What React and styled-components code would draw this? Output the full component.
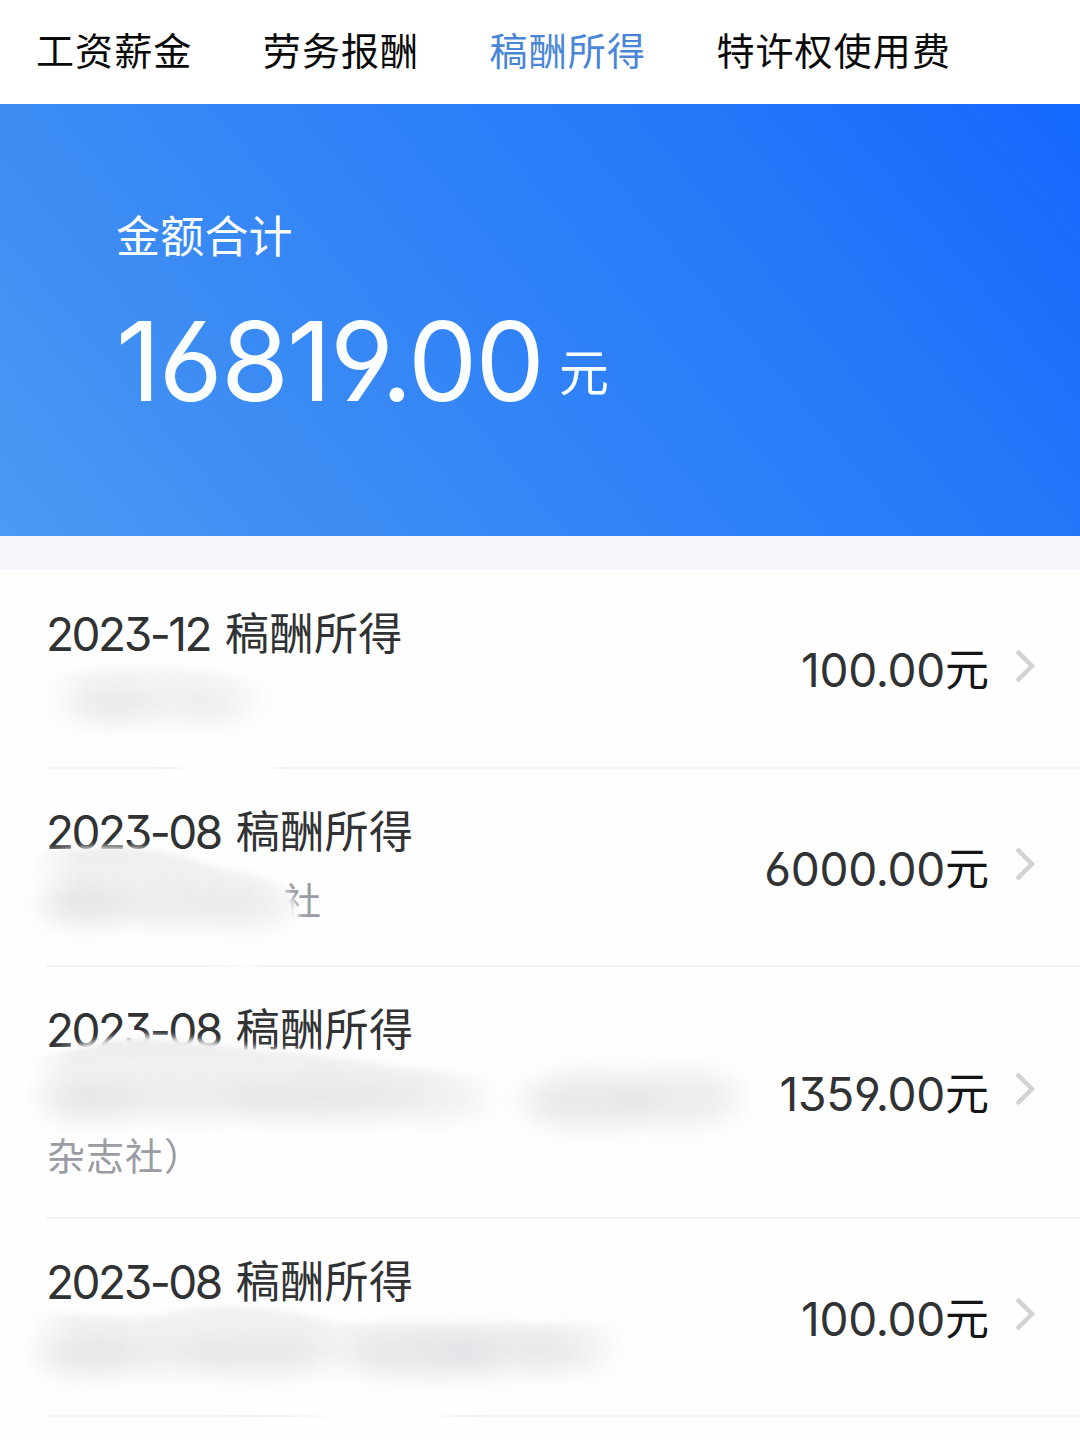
import React from 'react';
import styled, { createGlobalStyle } from 'styled-components';

const GlobalStyle = createGlobalStyle`
  *, *::before, *::after { box-sizing: border-box; }
  body {
    margin: 0;
    background: #fefefe;
    font-family: Inter, "Noto Sans CJK SC", sans-serif;
    font-feature-settings: "cv03", "cv04", "cv09", "ss03";
    color: #303234;
  }
`;

const Page = styled.main`
  width: 1080px;
  height: 1440px;
  overflow: hidden;
  background: #fefefe;
`;

const Tabs = styled.nav`
  display: flex;
  align-items: center;
  gap: 70.4px;
  height: 104px;
  padding: 0 36px 3px;
  background: #fff;
`;

const Tab = styled.a`
  font-size: 38px;
  line-height: 56px;
  letter-spacing: 1.1px;
  white-space: nowrap;
  color: ${({ $active }) => ($active ? '#4a86d8' : '#0a0a0a')};
`;

const Summary = styled.section`
  display: flex;
  flex-direction: column;
  height: 432px;
  padding: 101px 116px 0;
  color: #fafeff;
  background: linear-gradient(50deg, #4b9af4 0%, #3c8cf3 25%, #3182f8 48%, #2578f8 72%, #1467fd 100%);
`;

const SummaryLabel = styled.div`
  font-size: 44px;
  line-height: 64px;
  letter-spacing: 0.2px;
`;

const SummaryTotal = styled.div`
  margin-top: 26px;
  line-height: 132px;
`;

const TotalNumber = styled.span`
  font-size: 110px;
  letter-spacing: -1.9px;
`;

const TotalUnit = styled.span`
  margin-left: 16px;
  font-size: 50px;
  line-height: 1;
  vertical-align: 10px;
`;

const List = styled.ul`
  margin: 0;
  padding: 0 0 0 46px;
  list-style: none;
  border-top: 34px solid #f4f6fb;
`;

const Row = styled.li`
  position: relative;
  display: flex;
  align-items: center;
  justify-content: space-between;
  height: ${({ $height }) => $height}px;
  padding-right: 44px;
  border-bottom: 2px solid #f1f2f2;
`;

const Details = styled.div`
  align-self: flex-start;
  padding-top: ${({ $top }) => $top}px;
`;

const Title = styled.div`
  height: 66px;
  line-height: 66px;
  white-space: nowrap;
`;

const Month = styled.span`
  font-size: 46px;
  letter-spacing: -2.5px;
`;

const Category = styled.span`
  margin-left: 15px;
  font-size: 44px;
  line-height: 1;
  letter-spacing: 0.4px;
  vertical-align: 1px;
`;

const Payer = styled.div`
  margin-top: ${({ $gap }) => $gap}px;
  padding-left: ${({ $indent }) => $indent}px;
  font-size: 38px;
  line-height: 54px;
  letter-spacing: 1px;
  color: #999ca2;
`;

const Value = styled.div`
  display: flex;
  align-items: center;
  gap: 25px;
`;

const Amount = styled.span`
  padding-top: 3px;
  font-size: 46px;
  line-height: 66px;
  letter-spacing: -0.3px;
  white-space: nowrap;
`;

const Yuan = styled.span`
  font-size: 44px;
  line-height: 1;
  letter-spacing: 0;
  vertical-align: 1px;
  color: #151515;
`;

const Arrow = styled.svg`
  display: block;
  width: 22px;
  height: 36px;
  margin-top: -6px;
`;

const Smear = styled.svg`
  position: absolute;
  left: -46px;
  top: 0;
  width: 800px;
  height: 220px;
  overflow: visible;
  pointer-events: none;
`;

const records = [
  {
    month: '2023-12', amount: '100.00', height: 199, top: 31,
    span: [40, 285], tone: 0.5,
    veil: 'M60 108 C110 92 180 92 220 104 L270 112 L250 150 L280 205 L200 205 L60 160 Z',
    edge: 'M30 112 C90 94 170 92 220 104 L290 114 L280 175 L30 175 Z',
    blobs: [[118, 134, 48, 18, 0.6], [205, 134, 42, 18, 0.45]],
  },
  {
    month: '2023-08', amount: '6000.00', height: 198, top: 30, payer: '社', gap: 9, indent: 237,
    span: [30, 330], tone: 0.8,
    veil: 'M44 84 C90 78 150 76 190 90 C230 106 270 100 292 132 C302 150 302 170 286 178 L250 200 L50 175 Z',
    edge: 'M20 86 C80 76 150 76 190 90 C230 106 270 100 296 132 C304 150 300 166 280 178 L20 178 Z',
    blobs: [[85, 135, 40, 20, 0.7], [170, 136, 60, 20, 0.45], [245, 139, 40, 20, 0.45]],
  },
  {
    month: '2023-08', amount: '1359.00', height: 252, top: 30, payer: '杂志社）', gap: 66, indent: 1,
    span: [28, 500], tone: 0.8,
    veil: 'M44 88 C80 78 120 66 160 70 C220 74 250 84 300 84 C350 88 400 104 480 106 L740 100 L740 155 L300 162 L60 166 Z',
    edge: 'M20 94 C80 82 120 70 160 73 C220 77 250 85 300 86 C350 91 400 102 520 114 L520 178 L20 178 Z',
    blobs: [[90, 132, 45, 20, 0.65], [190, 132, 80, 18, 0.4], [320, 131, 90, 20, 0.6], [435, 133, 50, 18, 0.35], [590, 134, 66, 27, 0.65], [680, 131, 58, 28, 0.55]],
  },
  {
    month: '2023-08', amount: '100.00', height: 198, top: 30,
    span: [28, 630], tone: 0.75,
    veil: 'M46 96 C80 88 130 102 170 92 C220 82 280 86 330 100 L600 102 L610 170 L400 205 L50 175 Z',
    edge: 'M20 96 C80 90 130 106 170 94 C220 82 280 88 335 104 L640 106 L640 178 L20 178 Z',
    blobs: [[85, 135, 46, 21, 0.6], [160, 134, 70, 19, 0.4], [260, 134, 70, 21, 0.6], [420, 135, 75, 22, 0.65], [500, 133, 60, 20, 0.5], [565, 133, 38, 20, 0.45]],
  },
];

function Redaction({ id, veil, edge, blobs, span, tone }) {
  const [from, to] = span;
  return (
    <Smear viewBox="0 0 800 220" aria-hidden="true">
      <defs>
        <filter id={`soft-${id}`} x="-10%" y="-30%" width="120%" height="160%">
          <feGaussianBlur stdDeviation="3.5" />
        </filter>
        <filter id={`wide-${id}`} x="-60%" y="-150%" width="220%" height="400%">
          <feGaussianBlur stdDeviation="15 12" />
        </filter>
        <linearGradient id={`fade-${id}`} gradientUnits="userSpaceOnUse" x1="0" y1="72" x2="0" y2="176">
          <stop offset="0" stopColor="#e6e6e6" />
          <stop offset="0.3" stopColor="#efefef" />
          <stop offset="0.6" stopColor="#f3f4f5" />
          <stop offset="1" stopColor="#fefefe" stopOpacity="0" />
        </linearGradient>
        <linearGradient id={`sides-${id}`} gradientUnits="userSpaceOnUse" x1={from} y1="0" x2={to} y2="0">
          <stop offset="0" stopColor="#000" />
          <stop offset={45 / (to - from)} stopColor="#fff" />
          <stop offset={1 - 80 / (to - from)} stopColor="#fff" />
          <stop offset="1" stopColor="#000" />
        </linearGradient>
        <mask id={`mask-${id}`} maskUnits="userSpaceOnUse" x="0" y="0" width="800" height="220">
          <rect width="800" height="220" fill={`url(#sides-${id})`} />
        </mask>
      </defs>
      <path d={veil} fill="#fefefe" filter={`url(#soft-${id})`} />
      <g mask={`url(#mask-${id})`} opacity={tone}>
        <path d={edge} fill={`url(#fade-${id})`} filter={`url(#soft-${id})`} />
      </g>
      {blobs.map(([cx, cy, rx, ry, opacity]) => (
        <ellipse key={cx} cx={cx} cy={cy} rx={rx} ry={ry} fill="#dcdfe2" opacity={opacity} filter={`url(#wide-${id})`} />
      ))}
    </Smear>
  );
}

function IncomeRow({ record, id }) {
  return (
    <Row $height={record.height}>
      <Details $top={record.top}>
        <Title>
          <Month>{record.month}</Month>
          <Category>稿酬所得</Category>
        </Title>
        {record.payer && <Payer $gap={record.gap} $indent={record.indent}>{record.payer}</Payer>}
      </Details>
      <Value>
        <Amount>{record.amount}<Yuan>元</Yuan></Amount>
        <Arrow viewBox="0 0 22 36" fill="none">
          <path d="M3 3 L18 18 L3 33" stroke="#d0d2d5" strokeWidth="4.5" />
        </Arrow>
      </Value>
      <Redaction
        id={id}
        veil={record.veil}
        edge={record.edge}
        blobs={record.blobs}
        span={record.span}
        tone={record.tone}
      />
    </Row>
  );
}

export default function App() {
  return (
    <Page>
      <GlobalStyle />
      <Tabs>
        <Tab>工资薪金</Tab>
        <Tab>劳务报酬</Tab>
        <Tab $active>稿酬所得</Tab>
        <Tab>特许权使用费</Tab>
      </Tabs>
      <Summary>
        <SummaryLabel>金额合计</SummaryLabel>
        <SummaryTotal>
          <TotalNumber>16819.00</TotalNumber>
          <TotalUnit>元</TotalUnit>
        </SummaryTotal>
      </Summary>
      <List>
        {records.map((record, index) => (
          <IncomeRow key={index} id={index} record={record} />
        ))}
      </List>
    </Page>
  );
}
